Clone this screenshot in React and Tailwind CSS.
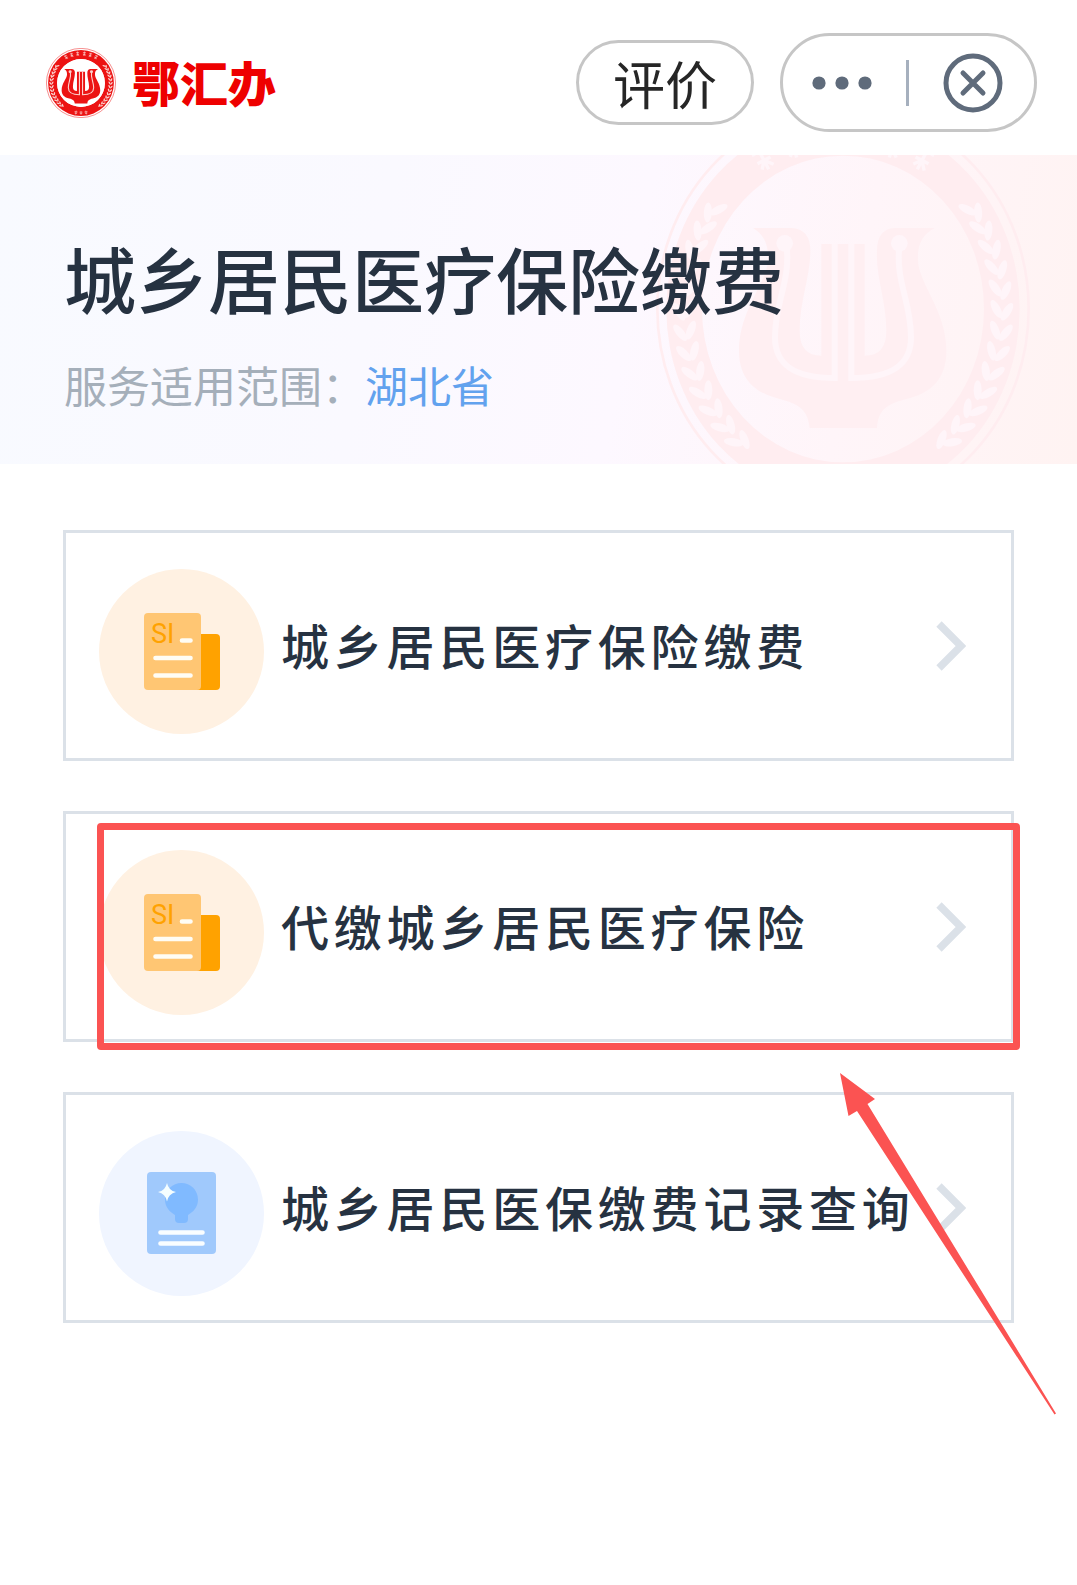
import React from 'react';

const services = [
    { id: 1, title: '城乡居民医疗保险缴费', icon: 'document' },
    { id: 2, title: '代缴城乡居民医疗保险', icon: 'document', highlight: true },
    { id: 3, title: '城乡居民医保缴费记录查询', icon: 'record', arrow: true },
];

// leaf positions on the ring, in degrees from the horizontal axis
const leafAngles = [-35, -28, -21, -14, -7, 0, 7, 14, 21, 28, 35, 42, 49];

function Leaves({ fill }) {
    return (
        <g fill={fill}>
            {leafAngles.map((deg) => {
                const a = (deg * Math.PI) / 180;
                const x = 610 + 478 * Math.cos(a);
                const y = 475 + 519 * Math.sin(a);
                return (
                    <g key={deg}>
                        <ellipse cx={x - 18} cy={y} rx="12" ry="30" transform={`rotate(${deg - 28} ${x - 18} ${y})`} />
                        <ellipse cx={x + 14} cy={y + 8} rx="12" ry="30" transform={`rotate(${deg + 32} ${x + 14} ${y + 8})`} />
                    </g>
                );
            })}
        </g>
    );
}

function Emblem({ className, color, lyre, light, innerRx, innerRy, innerFill }) {
    return (
        <svg className={className} viewBox="46 -137 1128 1224" preserveAspectRatio="none" aria-hidden="true">
            <ellipse cx="610" cy="475" rx="557" ry="605" fill="none" stroke={color} strokeWidth="8" />
            {/* ring with the centre cut out */}
            <path
                fill={color}
                fillRule="evenodd"
                d={`M80 475a530 576 0 1 0 1060 0a530 576 0 1 0 -1060 0Z M${610 - innerRx} 475a${innerRx} ${innerRy} 0 1 0 ${innerRx * 2} 0a${innerRx} ${innerRy} 0 1 0 ${-innerRx * 2} 0Z`}
            />
            <ellipse cx="610" cy="475" rx={innerRx} ry={innerRy} fill={innerFill} />
            <Leaves fill={light} />
            <g transform="translate(1220 0) scale(-1 1)">
                <Leaves fill={light} />
            </g>
            <g stroke={light} strokeWidth="10" fill="none">
                {[-28, -17, -6, 6, 17, 28].map((deg) => (
                    <path
                        key={deg}
                        transform={`rotate(${deg} 610 475)`}
                        d="M585 -60H635M610 -80V0M588 -30L632 -30M592 -8L610 -30L630 -6"
                    />
                ))}
                {[-9, 0, 9].map((deg) => (
                    <path key={deg} transform={`rotate(${deg} 610 475)`} d="M585 985H635M610 965V1030M590 1010H630" />
                ))}
            </g>
            {/* lyre */}
            <path
                fill={lyre}
                d="M340 232H455Q512 235 512 300C512 380 480 450 480 540Q480 615 545 615V280H675V615Q740 615 740 540C740 450 708 380 712 300Q712 235 765 232H885C850 250 832 280 835 330C838 400 920 480 920 600C920 680 880 725 800 745C740 760 715 780 712 832H510C505 780 480 760 420 745C340 725 298 680 298 600C298 480 380 400 385 330C388 280 370 250 340 232Z"
            />
            <g fill="none" stroke={light} strokeWidth="18">
                <path d="M440 280C455 390 406 450 406 560C406 640 460 682 585 682V280" />
                <path d="M780 280C765 390 814 450 814 560C814 640 760 682 635 682V280" />
            </g>
            <circle cx="435" cy="278" r="25" fill={light} />
            <circle cx="779" cy="278" r="25" fill={light} />
        </svg>
    );
}

function DocumentIcon() {
    return (
        <svg className="h-[165px] w-[165px]" viewBox="0 0 165 165" aria-hidden="true">
            <circle cx="82.5" cy="82.5" r="82.5" fill="#fff1e2" />
            <rect x="92" y="65" width="29" height="56" rx="4" fill="#ffa200" />
            <rect x="45" y="44" width="57" height="77" rx="4" fill="#ffc673" />
            <text x="52" y="74" fontSize="27" fontFamily="Roboto, sans-serif" fill="#ffa200">SI</text>
            <path
                d="M83 71.5H91.5M56.5 89H91.5M56.5 106.5H91.5"
                stroke="#fffdf5"
                strokeWidth="4.6"
                strokeLinecap="round"
            />
        </svg>
    );
}

function RecordIcon() {
    return (
        <svg className="h-[165px] w-[165px]" viewBox="0 0 165 165" aria-hidden="true">
            <circle cx="82.5" cy="82.5" r="82.5" fill="#f0f5ff" />
            <rect x="48" y="41" width="69" height="82" rx="4" fill="#a0c9fc" />
            <path
                d="M82.5 52a16.5 16.5 0 0 1 16.5 16.5c0 7-4 12-10 15.5v4q0 4-4 4h-5q-4 0-4-4v-4c-6-3.5-10-8.5-10-15.5a16.5 16.5 0 0 1 16.5-16.5Z"
                fill="#80baff"
            />
            <path d="M68 52Q69.5 59.5 77 61Q69.5 62.5 68 70.5Q66.5 62.5 59 61Q66.5 59.5 68 52Z" fill="#f5feff" />
            <path d="M61.5 101.5H103.5M61.5 112.5H103.5" stroke="#f9fdff" strokeWidth="4.6" strokeLinecap="round" />
        </svg>
    );
}

function ServiceCard({ item }) {
    return (
        <li className="relative">
            <a
                href="#"
                className="flex items-center border-3 border-[#dbe1e8] bg-white py-6 pl-[33px] pr-[45px]"
            >
                <span className="mt-3 shrink-0">
                    {item.icon === 'document' ? <DocumentIcon /> : <RecordIcon />}
                </span>
                <span className="ml-[17px] flex-1 whitespace-nowrap pb-1 text-5xl font-medium tracking-widest text-[#263241]">
                    {item.title}
                </span>
                <svg className="h-[50px] w-[30px] shrink-0" viewBox="0 0 30 50" fill="none" aria-hidden="true">
                    <path d="M3 3L25 25L3 47" stroke="#dbe1e8" strokeWidth="7.5" />
                </svg>
            </a>

            {item.highlight && (
                <div className="pointer-events-none absolute -bottom-2 -right-1.5 left-[34px] top-3 z-10 rounded-sm border-7 border-[#fb5352]" />
            )}

            {item.arrow && (
                <svg
                    className="pointer-events-none absolute -right-11 -top-5 z-10 h-[344px] w-[220px]"
                    viewBox="838 1072 220 344"
                    aria-hidden="true"
                >
                    <path d="M840 1073L875 1099L867.5 1104L1056 1413.5L1054.5 1414.5L857 1111L848.5 1116Z" fill="#fb5352" />
                </svg>
            )}
        </li>
    );
}

export default function App() {
    return (
        <div className="min-h-screen bg-white font-['Noto_Sans_CJK_SC',sans-serif]">
            {/* --- HEADER --- */}
            <header className="flex h-[155px] items-center justify-between pb-2 pl-[46px] pr-10 pt-[18px]">
                <div className="flex items-center gap-4">
                    <Emblem
                        className="h-[70px] w-[70px]"
                        color="#ec1313"
                        lyre="#ec1313"
                        light="#fbd0cc"
                        innerRx={385}
                        innerRy={418}
                        innerFill="#ffffff"
                    />
                    <span className="pb-1 text-5xl font-black leading-none text-[#ee0000]">鄂汇办</span>
                </div>

                <div className="flex items-center gap-[26px]">
                    <button
                        type="button"
                        className="flex h-[85px] w-[178px] items-center justify-center rounded-full border-3 border-[#c6c6c6] text-[52px] leading-none text-[#262626]"
                    >
                        评价
                    </button>
                    <div className="flex h-[99px] w-[257px] items-center justify-between rounded-full border-3 border-[#c6c6c6] pl-[29px] pr-[31px]">
                        <button type="button" aria-label="更多">
                            <svg className="h-[14px] w-[60px]" viewBox="0 0 60 14" fill="#5f6b7b">
                                <circle cx="7" cy="7" r="6.6" />
                                <circle cx="30" cy="7" r="6.6" />
                                <circle cx="53" cy="7" r="6.6" />
                            </svg>
                        </button>
                        <span className="h-[46px] w-[3px] bg-[#a6b0be]" />
                        <button type="button" aria-label="关闭">
                            <svg className="h-[60px] w-[60px]" viewBox="0 0 60 60" fill="none" stroke="#5f6b7b" strokeWidth="5">
                                <circle cx="30" cy="30" r="27" />
                                <path d="M20 20L40 40M40 20L20 40" strokeLinecap="round" />
                            </svg>
                        </button>
                    </div>
                </div>
            </header>

            {/* --- BANNER --- */}
            <section className="relative overflow-hidden bg-[linear-gradient(100deg,#f8faff_0%,#faf9ff_35%,#fdf8ff_58%,#fff5f9_78%,#fff3f2_100%)] px-16 pb-[50px] pt-[78px]">
                <Emblem
                    className="absolute -top-[50px] right-[46px] h-[408px] w-[376px]"
                    color="#ffedf0"
                    lyre="#ffeff2"
                    light="#fff5f9"
                    innerRx={423}
                    innerRy={460}
                    innerFill="none"
                />
                <h1 className="relative text-7xl font-medium leading-[88px] text-[#263241]">城乡居民医疗保险缴费</h1>
                <p className="relative mt-[33px] text-[43px] leading-[60px] text-[#a5afba]">
                    服务适用范围：<span className="text-[#62a2ee]">湖北省</span>
                </p>
            </section>

            {/* --- SERVICE LIST --- */}
            <main className="px-[63px] py-[66px]">
                <ul className="flex flex-col gap-[50px]">
                    {services.map((item) => (
                        <ServiceCard key={item.id} item={item} />
                    ))}
                </ul>
            </main>
        </div>
    );
}
